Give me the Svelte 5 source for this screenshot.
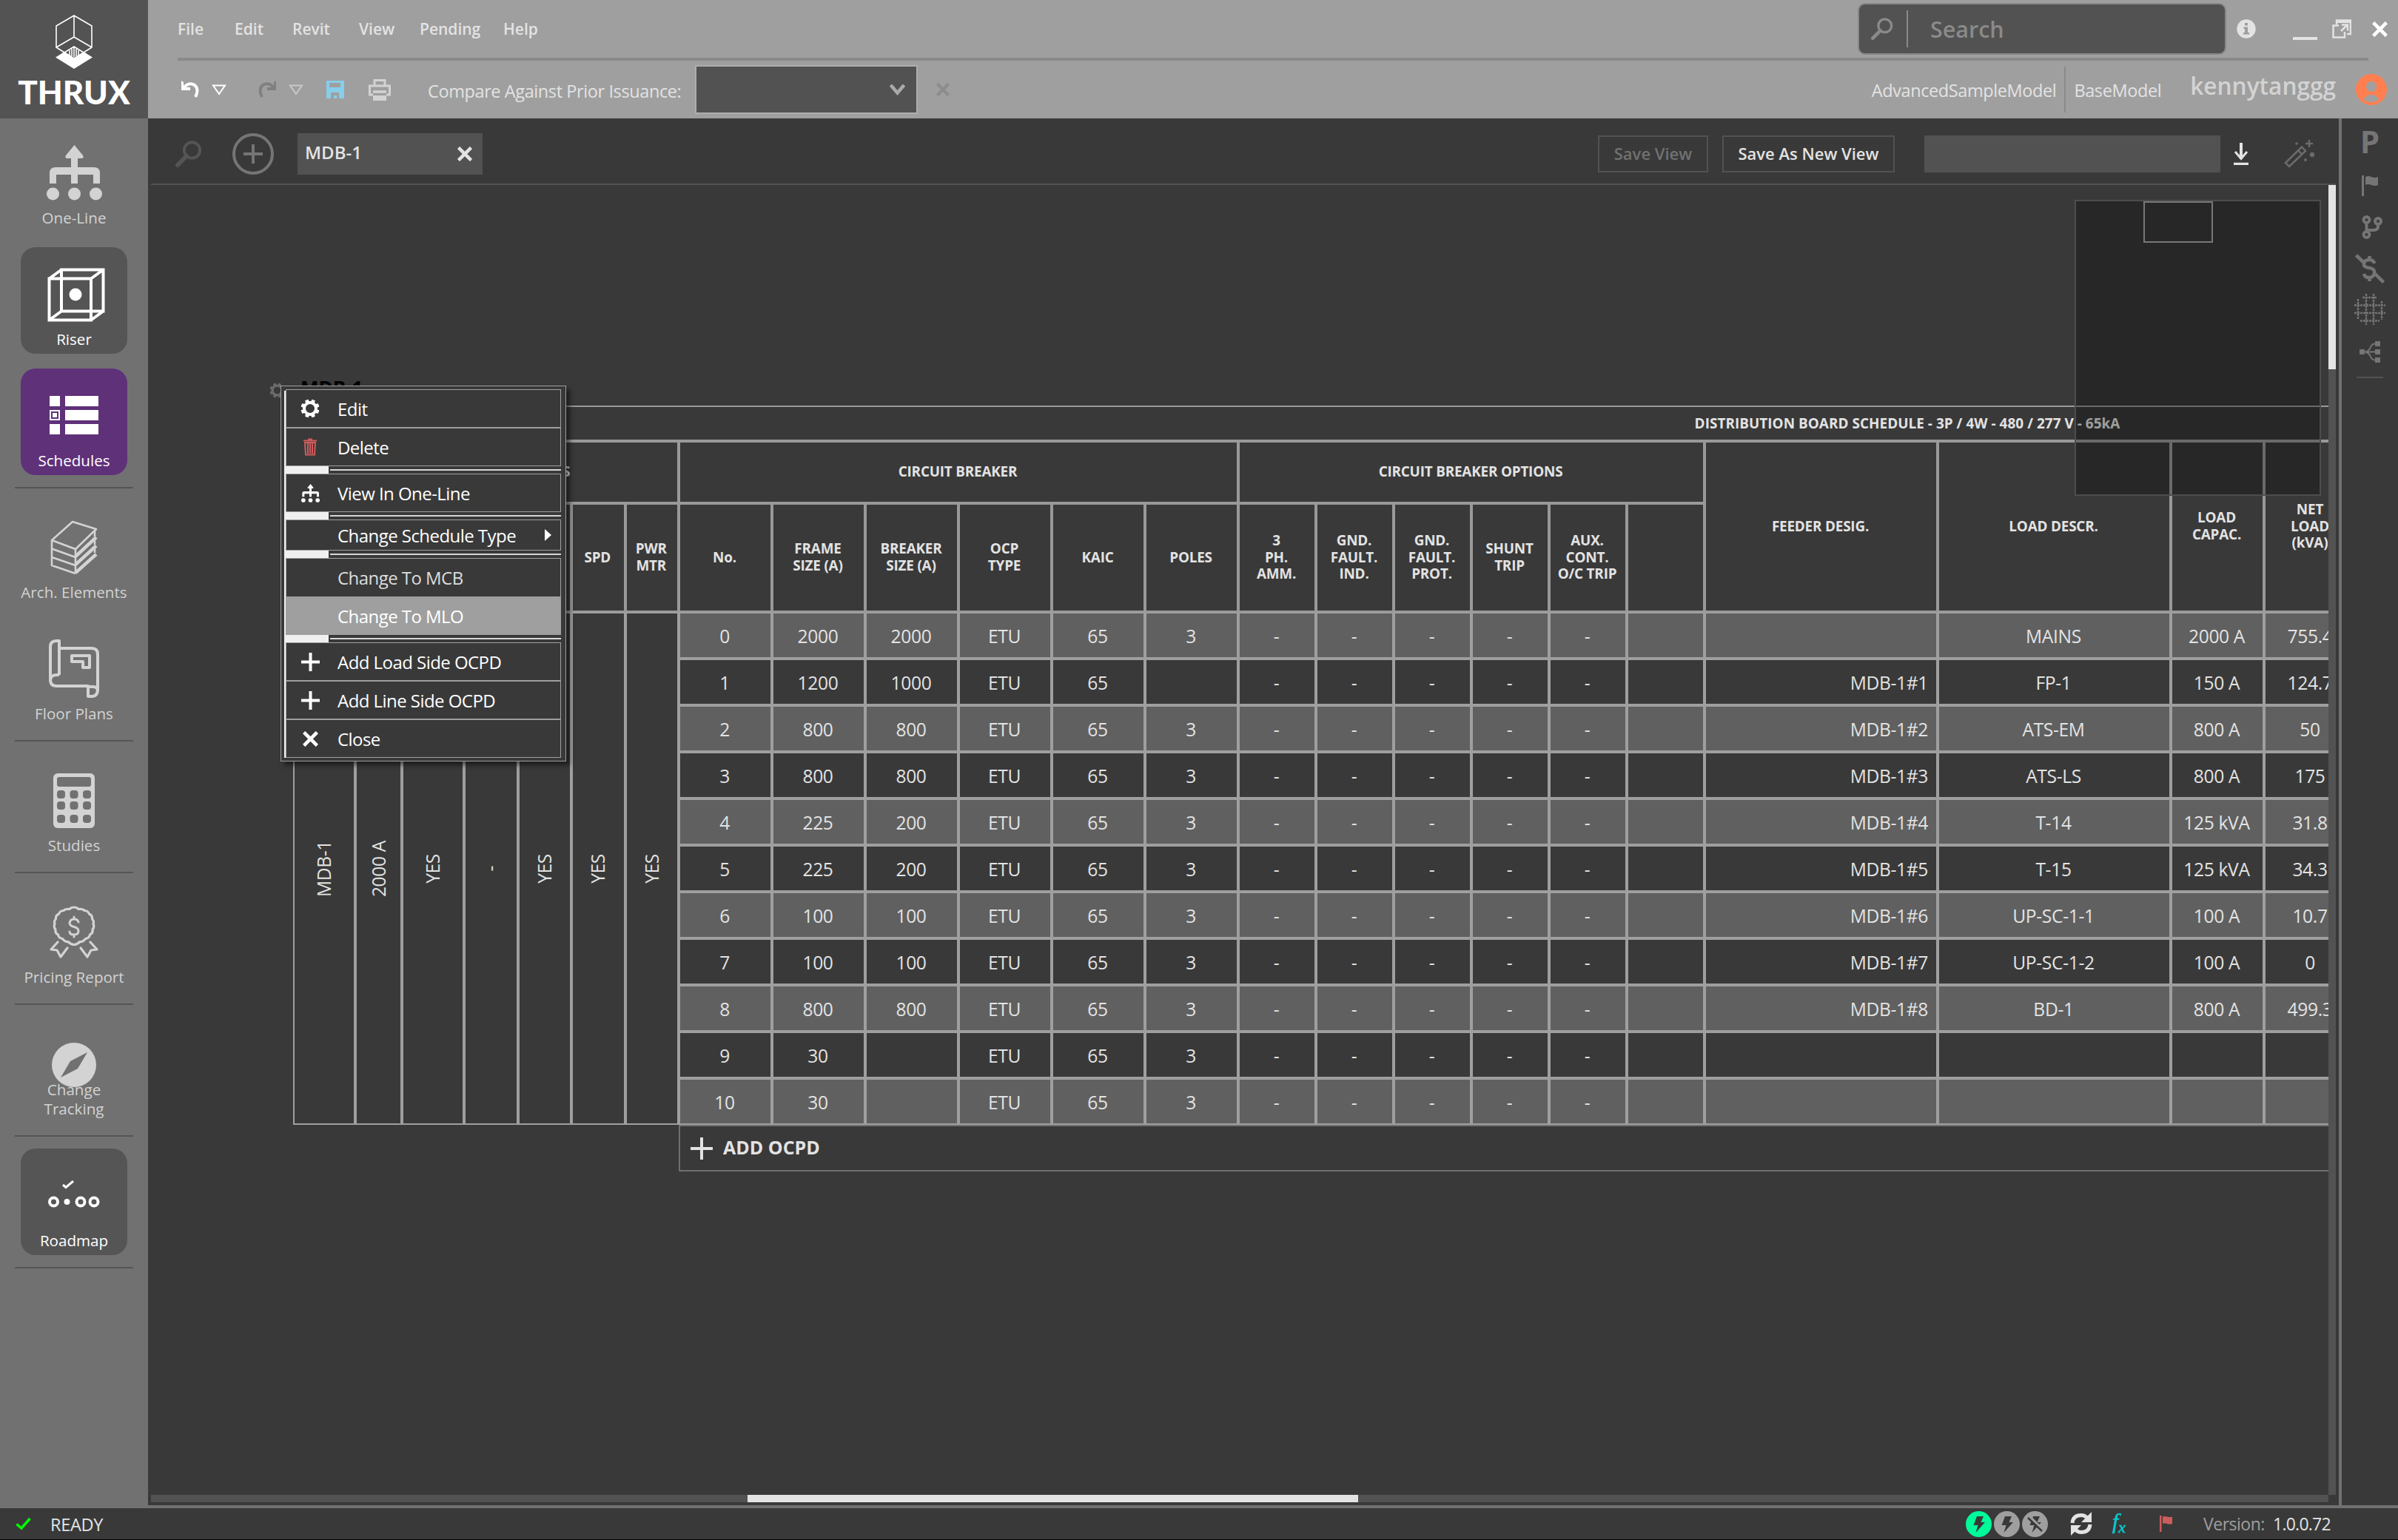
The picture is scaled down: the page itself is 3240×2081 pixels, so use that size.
<script>
  const menu = ['File', 'Edit', 'Revit', 'View', 'Pending', 'Help'];

  // nav entries are split in groups, each group is closed by a separator
  const nav = [
    [
      { id: 'one-line', label: 'One-Line' },
      { id: 'riser', label: 'Riser', open: true },
      { id: 'schedules', label: 'Schedules', active: true },
    ],
    [
      { id: 'arch', label: 'Arch. Elements' },
      { id: 'floor', label: 'Floor Plans' },
    ],
    [{ id: 'studies', label: 'Studies' }],
    [{ id: 'pricing', label: 'Pricing Report' }],
    [{ id: 'tracking', label: 'Change Tracking' }],
    [{ id: 'roadmap', label: 'Roadmap', open: true }],
  ];

  const leftHeads = ['', '', '', '', '', 'SPD', 'PWR MTR'];
  const leftValues = ['MDB-1', '2000 A', 'YES', '-', 'YES', 'YES', 'YES'];
  const breakerHeads = ['No.', 'FRAME\nSIZE (A)', 'BREAKER\nSIZE (A)', 'OCP\nTYPE', 'KAIC', 'POLES'];
  const optionHeads = ['3\nPH.\nAMM.', 'GND.\nFAULT.\nIND.', 'GND.\nFAULT.\nPROT.', 'SHUNT\nTRIP', 'AUX.\nCONT.\nO/C TRIP', ''];
  const loadHeads = ['FEEDER DESIG.', 'LOAD DESCR.', 'LOAD\nCAPAC.', 'NET\nLOAD\n(kVA)', ''];

  const circuits = [
    { frame: 2000, breaker: 2000, poles: 3, feeder: '', load: 'MAINS', capacity: '2000 A', net: '755.4' },
    { frame: 1200, breaker: 1000, poles: '', feeder: 'MDB-1#1', load: 'FP-1', capacity: '150 A', net: '124.7' },
    { frame: 800, breaker: 800, poles: 3, feeder: 'MDB-1#2', load: 'ATS-EM', capacity: '800 A', net: '50' },
    { frame: 800, breaker: 800, poles: 3, feeder: 'MDB-1#3', load: 'ATS-LS', capacity: '800 A', net: '175' },
    { frame: 225, breaker: 200, poles: 3, feeder: 'MDB-1#4', load: 'T-14', capacity: '125 kVA', net: '31.8' },
    { frame: 225, breaker: 200, poles: 3, feeder: 'MDB-1#5', load: 'T-15', capacity: '125 kVA', net: '34.3' },
    { frame: 100, breaker: 100, poles: 3, feeder: 'MDB-1#6', load: 'UP-SC-1-1', capacity: '100 A', net: '10.7' },
    { frame: 100, breaker: 100, poles: 3, feeder: 'MDB-1#7', load: 'UP-SC-1-2', capacity: '100 A', net: '0' },
    { frame: 800, breaker: 800, poles: 3, feeder: 'MDB-1#8', load: 'BD-1', capacity: '800 A', net: '499.3' },
    { frame: 30, breaker: '', poles: 3, feeder: '', load: '', capacity: '', net: '' },
    { frame: 30, breaker: '', poles: 3, feeder: '', load: '', capacity: '', net: '' },
  ];

  const contextMenu = [
    [
      { label: 'Edit', icon: 'gear' },
      { label: 'Delete', icon: 'trash' },
    ],
    [{ label: 'View In One-Line', icon: 'tree' }],
    [{ label: 'Change Schedule Type', submenu: true }],
    [
      { label: 'Change To MCB', disabled: true },
      { label: 'Change To MLO', hover: true },
    ],
    [
      { label: 'Add Load Side OCPD', icon: 'plus' },
      { label: 'Add Line Side OCPD', icon: 'plus' },
      { label: 'Close', icon: 'close' },
    ],
  ];

  const teeth = [0, 45, 90, 135, 180, 225, 270, 315];
  const bolt = 'M15 7h9l-3.500 8h5.500l-12.500 14l3-10h-6z';
</script>

{#snippet tree(size)}
  <svg width={size} height={size} viewBox="0 0 75 75" fill="currentColor">
    <path d="M37.500 0L49 14q2 4-2 4h-5v12h22q8 0 8 8v14h-9V40H42v12h-9V40H13v12H4V38q0-8 8-8h21V18h-5q-4 0-2-4z" />
    <circle cx="8.500" cy="66" r="8.500" /><circle cx="37.500" cy="66" r="8.500" /><circle cx="66.500" cy="66" r="8.500" />
  </svg>
{/snippet}

{#snippet gear(size)}
  <svg width={size} height={size} viewBox="0 0 26 26">
    <circle cx="13" cy="13" r="8" fill="none" stroke="currentColor" stroke-width="4" />
    {#each teeth as angle}
      <rect x="10.500" y="0.500" width="5" height="4.500" rx="1" fill="currentColor" transform="rotate({angle + 22.5} 13 13)" />
    {/each}
  </svg>
{/snippet}

{#snippet magnifier(w, h)}
  <svg width={w} height={h} viewBox="0 0 32 32" fill="none" stroke="currentColor">
    <circle cx="20" cy="11.500" r="9.500" stroke-width="3.500" />
    <path d="M13.500 18.500L2.500 29.500" stroke-width="5" stroke-linecap="round" />
  </svg>
{/snippet}

{#snippet cross(size)}
  <svg width={size} height={size} viewBox="0 0 20 20" stroke="currentColor" stroke-width="4.500">
    <path d="M1.500 1.500L18.500 18.500M18.500 1.500L1.500 18.500" />
  </svg>
{/snippet}

{#snippet navIcon(id)}
  {#if id === 'one-line'}
    {@render tree(75)}
  {:else if id === 'riser'}
    <svg width="78" height="73" viewBox="0 0 78 73" fill="none" stroke="#fff" stroke-width="4">
      <path d="M2.500 14.500H59V70.500H2.500zM19 2.500H75.500V58.500H19zM2.500 14.500L19 2.500M59 14.500L75.500 2.500M59 70.500L75.500 58.500M2.500 70.500L19 58.500" />
      <circle cx="38" cy="36" r="8.500" fill="#fff" stroke="none" />
    </svg>
  {:else if id === 'schedules'}
    <svg width="66" height="53" viewBox="0 0 66 53" fill="#fff">
      <path d="M0 0h14v14H0zM21 0h45v14H21zM0 19h14v14H0zM21 19h45v14H21zM0 38h14v14H0zM21 38h45v14H21z" />
      <rect x="3" y="22" width="8" height="8" fill="none" stroke="#5f3179" stroke-width="2" />
    </svg>
  {:else if id === 'arch'}
    <svg width="64" height="74" viewBox="0 0 64 74" fill="none" stroke="currentColor" stroke-width="2.600" stroke-linejoin="round">
      <path d="M2 27L30 2L62 12L34 39z" />
      <path d="M2 27V61L34 72M34 39V72M2 38.500L34 50M2 50L34 61M60 14V22M60 25V33M60 36V44" />
      <path d="M34 49L62 23M34 60L62 34.500M34 71L62 46" stroke-width="4.500" />
    </svg>
  {:else if id === 'floor'}
    <svg width="68" height="79" viewBox="0 0 68 79" fill="none" stroke="currentColor" stroke-width="4" stroke-linejoin="round">
      <path d="M14 48V2H10Q2 2 2 10V54Q2 63 10 63H53V77H58Q66 77 66 67V20Q66 12 58 12H14M14 48H10Q2 48 2 56M53 64H60Q66 64 66 70" />
      <path d="M31 22H55V38H46V30H31z" />
    </svg>
  {:else if id === 'studies'}
    <svg width="56" height="74" viewBox="0 0 56 74">
      <rect width="56" height="74" rx="6" fill="currentColor" />
      <g fill="#717171">
        <rect x="5" y="5" width="46" height="13" rx="3" />
        {#each [23, 38, 56] as y}
          {#each [5, 22.500, 40] as x}
            <rect {x} {y} width="11" height="11" rx="4" />
          {/each}
        {/each}
      </g>
    </svg>
  {:else if id === 'pricing'}
    <svg width="66" height="71" viewBox="0 0 66 71" fill="none" stroke="currentColor" stroke-width="3.200" stroke-linejoin="round" stroke-linecap="round">
      <path d="M33 2q4 0 6 2.500q6-.5 8 2q5 0 6.500 4.500q4.500 2 4 6.500q3 4 1.500 7q2 4-1 7.500q1 5-3.500 7q-1 5-6 5.500q-3 4.500-7.500 4q-4 4-8 4t-8-4q-4.500.5-7.500-4q-5-.5-6-5.500q-4.500-2-3.500-7q-3-3.500-1-7.500q-1.500-3 1.500-7q-.5-4.500 4-6.500q1.500-4.500 6.500-4.500q2-2.500 8-2q2-2.500 6-2.500z" />
      <path d="M11 49L2 59l8 1l5 9l9-12M55 49L64 59l-8 1l-5 9l-9-12" />
      <path d="M39 22q-1-4-6-4t-6 5q0 4 6 5.500t6 5.500q0 5-6 5t-6-4M33 15v3M33 39v3" stroke-width="3" />
    </svg>
  {:else if id === 'tracking'}
    <svg width="60" height="60" viewBox="0 0 60 60">
      <circle cx="30" cy="30" r="30" fill="currentColor" />
      <path d="M48 13L35 35L12 47L25 25z" fill="#717171" />
    </svg>
  {:else}
    <svg width="70" height="37" viewBox="0 0 70 37" fill="none" stroke="#fff" stroke-width="4">
      <circle cx="7.500" cy="29" r="5.500" /><circle cx="44" cy="29" r="5.500" /><circle cx="62" cy="29" r="5.500" />
      <circle cx="25.500" cy="29" r="4" fill="#fff" stroke="none" />
      <path d="M20 6L24 9.500L34 1" stroke-width="3" />
    </svg>
  {/if}
{/snippet}

{#snippet menuIcon(icon)}
  {#if icon === 'gear'}
    {@render gear(26)}
  {:else if icon === 'trash'}
    <svg width="18" height="24" viewBox="0 0 18 24" fill="none" stroke="#cd5c5c" stroke-width="2">
      <path d="M0 3.500h18M6 1.500h6M2 6l1 16.500h12l1-16.500zM6 7v14M9 7v14M12 7v14" />
    </svg>
  {:else if icon === 'tree'}
    {@render tree(25)}
  {:else if icon === 'plus'}
    <svg width="25" height="25" viewBox="0 0 25 25" fill="#fff"><path d="M10.500 0h4v10.500H25v4H14.500V25h-4V14.500H0v-4h10.500z" /></svg>
  {:else if icon === 'close'}
    {@render cross(21)}
  {/if}
{/snippet}

<div class="app">
  <div class="window">
    <aside class="sidebar">
      <div class="logo">
        <svg width="50" height="74" viewBox="0 0 50 74" fill="none" stroke="#fff" stroke-width="1.600">
          <path d="M25 1L49 15V44L25 59L1 44V15zM25 1V30M1 44L25 30L49 44" />
          <path d="M0 57.500L12 50L25 59L38 50L50 57.500L25 73z" fill="#fff" stroke="none" />
          <path d="M12 51L25 43L38 51M19 48v7M22 46v10M25 44v13M28 46v10M31 48v7" />
        </svg>
        <span>THRUX</span>
      </div>
      <nav>
        {#each nav as group}
          <div class="nav-group">
            {#each group as item}
              <button class="nav-item" class:open={item.open} class:active={item.active}>
                <span class="nav-icon {item.id}">{@render navIcon(item.id)}</span>
                <span class="nav-label">{item.label}</span>
              </button>
            {/each}
          </div>
        {/each}
      </nav>
    </aside>

    <div class="content">
      <header>
        <div class="title-row">
          <div class="menu">
            {#each menu as entry}
              <span>{entry}</span>
            {/each}
          </div>
          <div class="search">
            <span class="search-icon">{@render magnifier(30, 30)}</span>
            <span class="search-text">Search</span>
          </div>
          <div class="window-buttons">
            <svg width="26" height="26" viewBox="0 0 26 26">
              <circle cx="13" cy="13" r="12.700" fill="#e3e3e3" />
              <path d="M11 5h4v3.500h-4zM9.500 10.500H15V18h2v2.500H9V18h2v-5H9.500z" fill="#9f9f9f" />
            </svg>
            <svg class="minimize" width="33" height="4" viewBox="0 0 33 4"><rect width="33" height="4" fill="#e3e3e3" /></svg>
            <svg class="restore" width="26" height="26" viewBox="0 0 26 26" fill="none" stroke="#e3e3e3" stroke-width="2.500">
              <path d="M6 7V1.500H25V20H20M1.500 11V24.500H17V17M9 8.500H1.500V11M12 16L20 8M13 7.500h8v8" />
              <path d="M6 3H25" stroke-width="4" />
            </svg>
            <span class="window-close">{@render cross(21)}</span>
          </div>
        </div>
        <div class="tool-row">
          <svg width="24" height="24" viewBox="0 0 24 24" fill="none" stroke="#fff">
            <path d="M3 9.500Q8 3.500 14 4.500Q21 6 21.500 13Q21.500 18 19 22" stroke-width="4" />
            <path d="M0 0l3 2v7h9v4H0z" fill="#fff" stroke="none" />
          </svg>
          <svg class="drop" width="20" height="15" viewBox="0 0 20 15" fill="none" stroke="#fff" stroke-width="2"><path d="M2 1.500h16L10 13z" /></svg>
          <svg class="redo" width="24" height="24" viewBox="0 0 24 24" fill="none" stroke="#808080">
            <path d="M21 9.500Q16 3.500 10 4.500Q3 6 2.500 13Q2.500 18 5 22" stroke-width="4" />
            <path d="M24 0l-3 2v7h-9v4h12z" fill="#808080" stroke="none" />
          </svg>
          <svg class="drop" width="20" height="15" viewBox="0 0 20 15" fill="none" stroke="#c8c8c8" stroke-width="2"><path d="M2 1.500h16L10 13z" /></svg>
          <svg class="save" width="24" height="24" viewBox="0 0 24 24">
            <path d="M0 0h24v24H0z" fill="#87ceeb" />
            <path d="M4 3h15v6H4zM6 16h11v8h-3v-4h-4v4H6z" fill="#9f9f9f" />
          </svg>
          <svg class="print" width="30" height="29" viewBox="0 0 30 29" fill="none" stroke="#d3d3d3" stroke-width="3">
            <path d="M8 9V1.500h14V9M6 21H1.500V9h27v12H24" />
            <path d="M6 22h18v7H6z" fill="#d3d3d3" stroke="none" />
            <path d="M6 17h18" stroke-width="3.500" />
          </svg>
          <span class="compare">Compare Against Prior Issuance:</span>
          <div class="select">
            <svg width="21" height="18" viewBox="0 0 21 18" fill="none" stroke="#aaa" stroke-width="4.500"><path d="M1.500 3L10.500 13.500L19.500 3" /></svg>
          </div>
          <span class="clear-select">{@render cross(18)}</span>
          <div class="account">
            <span class="model">AdvancedSampleModel</span>
            <span class="model base">BaseModel</span>
            <span class="user">kennytanggg</span>
            <svg width="42" height="42" viewBox="0 0 42 42">
              <circle cx="21" cy="21" r="21" fill="#ff7f50" />
              <circle cx="21" cy="17" r="7" fill="#9f9f9f" />
              <path d="M11 35q2-7 10-7t10 7q-10 6-20 0z" fill="#9f9f9f" />
            </svg>
          </div>
        </div>
      </header>

      <div class="workspace">
        <main>
          <div class="view-bar">
            <span class="view-search">{@render magnifier(36, 36)}</span>
            <svg class="add-view" width="56" height="56" viewBox="0 0 56 56" fill="none" stroke="#757575" stroke-width="4">
              <circle cx="28" cy="28" r="26" /><path d="M28 15v26M15 28h26" />
            </svg>
            <div class="tab"><span>MDB-1</span>{@render cross(20)}</div>
            <div class="view-actions">
              <button class="view-button muted">Save View</button>
              <button class="view-button save-new">Save As New View</button>
              <div class="view-input"></div>
              <svg class="download" width="20" height="30" viewBox="0 0 20 30" fill="none" stroke="#e3e3e3">
                <path d="M10 0v22" stroke-width="4" /><path d="M2 12L10 21.500L18 12" stroke-width="3" /><path d="M0 28.500h20" stroke-width="3.500" />
              </svg>
              <svg width="42" height="38" viewBox="0 0 42 38" fill="none" stroke="#6b6b6b" stroke-width="2.600">
                <path d="M24 9.500L29 15L7 36L2 31zM19 14L24 19.500" />
                <path d="M34 0v10M29 5h10" stroke-width="2.500" />
                <g fill="#6b6b6b" stroke="none"><circle cx="38" cy="20" r="3.200" /><circle cx="29" cy="27" r="2" /><circle cx="17" cy="5" r="1.800" /></g>
              </svg>
            </div>
          </div>

          <div class="viewport">
            <div class="canvas">
              <span class="board-gear">{@render gear(21)}</span>
              <span class="board-name">MDB-1</span>

              <div class="schedule">
                <div class="cell head title">DISTRIBUTION BOARD SCHEDULE - 3P / 4W - 480 / 277 V - 65kA</div>

                <div class="cell head group-left">BOARD CHARACTERISTICS</div>
                <div class="cell head group-six">CIRCUIT BREAKER</div>
                <div class="cell head group-six">CIRCUIT BREAKER OPTIONS</div>
                {#each loadHeads as head}
                  <div class="cell head tall">{head}</div>
                {/each}

                {#each [...leftHeads, ...breakerHeads, ...optionHeads] as head}
                  <div class="cell head">{head}</div>
                {/each}

                {#each leftValues as value}
                  <div class="cell vertical"><span>{value}</span></div>
                {/each}

                {#each circuits as c, no}
                  {#each [no, c.frame, c.breaker, 'ETU', 65, c.poles, '-', '-', '-', '-', '-', '', c.feeder, c.load, c.capacity, c.net, ''] as value, col}
                    <div class="cell" class:alt={no % 2 === 0} class:feeder={col === 12}>{value}</div>
                  {/each}
                {/each}

                <div class="add-ocpd">
                  <svg width="30" height="30" viewBox="0 0 30 30" fill="#e3e3e3"><path d="M13 0h4v13h13v4H17v13h-4V17H0v-4h13z" /></svg>
                  <span>ADD OCPD</span>
                </div>
              </div>

              <div class="minimap"><div class="minimap-view"></div></div>

              <div class="context-menu">
                {#each contextMenu as section, i}
                  {#if i > 0}
                    <div class="separator"><i></i><b></b></div>
                  {/if}
                  {#each section as item}
                    <div class="context-item" class:short={item.submenu} class:disabled={item.disabled} class:hover={item.hover}>
                      <span class="context-icon">{@render menuIcon(item.icon)}</span>
                      <span class="context-label">{item.label}</span>
                      {#if item.submenu}
                        <svg class="arrow" width="9" height="16" viewBox="0 0 9 16"><path d="M0 0L9 8L0 16z" fill="#fff" /></svg>
                      {/if}
                    </div>
                  {/each}
                {/each}
              </div>
            </div>
            <div class="track-y"><div class="thumb-y"></div></div>
            <div class="track-x"><div class="thumb-x"></div></div>
          </div>
        </main>

        <aside class="rail">
          <span class="letter">P</span>
          <svg width="22" height="28" viewBox="0 0 22 28" fill="#757575"><path d="M0 0h3v28H0zM5 2q4-2 8 0t9 0v11q-4 2-9 0t-8 0z" /></svg>
          <svg class="branch" width="28" height="32" viewBox="0 0 28 32" fill="none" stroke="#757575" stroke-width="4">
            <circle cx="6.500" cy="6" r="4" /><circle cx="22" cy="8" r="4" /><circle cx="6.500" cy="26" r="4" />
            <path d="M6.500 10v12M22 12v3q0 5-6 5H7" />
          </svg>
          <svg width="40" height="40" viewBox="0 0 40 40" fill="none" stroke="#757575" stroke-width="4.500">
            <path d="M1.500 2L12 12M27 27L38.500 38.500" />
            <path d="M26 13q-1-5-7-5t-7 5t7 6t7 7t-7 6t-7-5M19.500 3v5M19.500 32v5" />
          </svg>
          <svg width="42" height="42" viewBox="0 0 42 42" fill="none" stroke="#757575" stroke-width="2.400" stroke-dasharray="3 1">
            <path d="M0 15.500h42M0 26h42M16 0v42M26 0v42M5 7v28M37 10v25M11 5h20M8 36.500h26" />
          </svg>
          <svg width="28" height="29" viewBox="0 0 28 29" fill="#757575">
            <path d="M0 11h7v7H0zM21 0h7v7h-7zM21 11h7v7h-7zM21 22h7v7h-7z" />
            <path d="M6 14.500h16M8 14.500Q13 13 15 8T22 3.500M8 14.500Q13 16 15 21T22 25.500" fill="none" stroke="#757575" stroke-width="2" />
          </svg>
          <hr />
        </aside>
      </div>
    </div>
  </div>

  <footer>
    <svg class="ready-check" width="21" height="18" viewBox="0 0 21 18" fill="none" stroke="#00ff00" stroke-width="3.500"><path d="M1.500 9.500L8 15L19.500 2" /></svg>
    <span class="ready">READY</span>
    <div class="status">
      <svg width="35" height="35" viewBox="0 0 35 35"><circle cx="17.500" cy="17.500" r="17.500" fill="#00fa9a" /><path d={bolt} fill="#393939" /></svg>
      <svg width="35" height="35" viewBox="0 0 35 35"><circle cx="17.500" cy="17.500" r="17.500" fill="#9f9f9f" /><path d={bolt} fill="#393939" /></svg>
      <svg width="35" height="35" viewBox="0 0 35 35">
        <circle cx="17.500" cy="17.500" r="17.500" fill="#9f9f9f" /><path d={bolt} fill="#393939" />
        <path d="M10 8L28 26" stroke="#9f9f9f" stroke-width="5" /><path d="M8 9L27 27" stroke="#393939" stroke-width="2.500" />
      </svg>
      <svg class="sync" width="30" height="32" viewBox="0 0 30 32" fill="none" stroke="#e3e3e3" stroke-width="5">
        <path d="M3 15Q4 4.500 15 4.500Q20 4.500 24 9M27 17Q26 27.500 15 27.500Q10 27.500 6 23" />
        <path d="M29 0v14H15zM1 32V18h14z" fill="#e3e3e3" stroke="none" />
      </svg>
      <span class="fx">f<sub>x</sub></span>
      <svg class="status-flag" width="17" height="22" viewBox="0 0 17 22" fill="#cd5c5c"><path d="M0 0h2.500v22H0zM4 1.500q3-1 6 0t7 0V11q-3 1.500-7 0t-6 0z" /></svg>
      <span class="version">Version:</span>
      <span class="version-number">1.0.0.72</span>
    </div>
  </footer>
</div>

<style>
  :global(body) {
    background: #000;
  }

  .app {
    width: 3240px;
    height: 2081px;
    overflow: hidden;
    font-family: "Open Sans", "Noto Sans", sans-serif;
    color: #e3e3e3;
    background: #393939;
  }

  .app *,
  .app {
    box-sizing: border-box;
  }

  svg {
    display: block;
    flex: none;
  }

  button {
    font: inherit;
    color: inherit;
    border: 0;
    padding: 0;
    background: none;
  }

  .window {
    display: flex;
    height: 2038px;
  }

  .content {
    flex: 1;
    min-width: 0;
    display: flex;
    flex-direction: column;
  }

  /* sidebar */
  .sidebar {
    width: 200px;
    background: #717171;
    color: #d3d3d3;
  }

  .logo {
    height: 160px;
    padding-top: 20px;
    display: flex;
    flex-direction: column;
    align-items: center;
    background: #535353;
    color: #fff;
  }

  .logo span {
    margin-top: 3px;
    font: 900 44px/54px Lato, sans-serif;
  }

  nav {
    padding-top: 10px;
  }

  .nav-group {
    display: flex;
    flex-direction: column;
    align-items: center;
    gap: 20px;
  }

  .nav-group::after {
    content: "";
    width: 160px;
    height: 2px;
    margin: -4px 0 16px;
    background: #555;
  }

  .nav-item {
    width: 164px;
    height: 144px;
    display: flex;
    flex-direction: column;
    align-items: center;
    justify-content: flex-end;
    padding-bottom: 7px;
    border-radius: 20px;
    font-size: 20.6px;
    line-height: 25.5px;
  }

  .open,
  .active {
    width: 144px;
    background: #555;
    color: #fff;
  }

  .active {
    background: #5f3179;
  }

  .nav-icon {
    margin-bottom: 11px;
  }

  .nav-icon.riser {
    margin: 0 -6px 11px 0;
  }

  .nav-icon.schedules {
    margin-bottom: 22px;
  }

  .nav-icon.floor {
    margin-bottom: 9px;
  }

  .nav-icon.pricing {
    margin-bottom: 13px;
  }

  .nav-icon.tracking {
    margin-bottom: -9px;
  }

  .nav-icon.roadmap {
    margin-bottom: 32px;
  }

  .nav-icon.tracking + .nav-label {
    position: relative;
    width: 100px;
    text-align: center;
  }

  /* header */
  header {
    height: 160px;
    flex: none;
    background: #9f9f9f;
    padding: 0 0 0 40px;
  }

  .title-row {
    height: 82px;
    display: flex;
    align-items: center;
    border-bottom: 4px solid #8a8a8a;
    margin-right: 40px;
  }

  .menu {
    display: grid;
    grid-template-columns: 77px 78px 90px 82px 113px 60px;
    font-size: 21px;
    font-weight: 600;
    line-height: 28px;
    margin-right: auto;
  }

  .search {
    width: 498px;
    height: 70px;
    flex: none;
    display: flex;
    align-items: center;
    border: 2px solid #888;
    border-radius: 10px;
    background: #525252;
    color: #8a8a8a;
  }

  .search-icon {
    width: 66px;
    height: 50px;
    display: flex;
    align-items: center;
    justify-content: center;
    padding-right: 2px;
    border-right: 2px solid #8a8a8a;
  }

  .search-text {
    margin-left: 30px;
    font-size: 30.5px;
    font-weight: 600;
    line-height: 40px;
  }

  .window-buttons {
    display: flex;
    align-items: center;
    margin: 0 -26px 0 14px;
    color: #e3e3e3;
  }

  .minimize {
    margin: 26px 20px 0 50px;
  }

  .window-close {
    margin-left: 28px;
    color: #fff;
  }

  .tool-row {
    height: 78px;
    display: flex;
    align-items: center;
    padding-left: 5px;
    font-size: 23.5px;
    letter-spacing: -0.4px;
  }

  .drop {
    margin-left: 17px;
  }

  .redo {
    margin-left: 43px;
  }

  .save {
    margin-left: 31px;
  }

  .print {
    margin-left: 33px;
  }

  .compare {
    width: 361px;
    margin-left: 50px;
    padding-top: 3px;
    white-space: nowrap;
  }

  .select {
    width: 301px;
    height: 66px;
    display: flex;
    align-items: center;
    justify-content: flex-end;
    padding-right: 15px;
    border: 2px solid #aeaeae;
    background: #525252;
  }

  .clear-select {
    margin-left: 25px;
    color: #8c8c8c;
  }

  .account {
    flex: 1;
    display: flex;
    align-items: center;
    justify-content: flex-end;
    padding-right: 15px;
  }

  .model {
    height: 62px;
    line-height: 64px;
    padding-right: 11px;
  }

  .base {
    padding-left: 11px;
    border-left: 2px solid #8a8a8a;
  }

  .user {
    margin: -11px 27px 0 28px;
    font-size: 31.6px;
    font-weight: 600;
    letter-spacing: 0;
    color: #d3d3d3;
  }

  /* workspace */
  .workspace {
    flex: 1;
    display: flex;
    border-bottom: 4px solid #717171;
  }

  main {
    width: 2960px;
    padding-left: 4px;
  }

  .view-bar {
    width: 2952px;
    height: 90px;
    display: flex;
    align-items: center;
    border-bottom: 2px solid #525252;
    padding: 8px 28px 0 33px;
  }

  .view-search {
    color: #555;
  }

  .add-view {
    margin: 0 32px 0 41px;
  }

  .tab {
    width: 250px;
    height: 56px;
    display: flex;
    align-items: center;
    justify-content: space-between;
    padding: 0 14px 0 10px;
    background: #525252;
    font-size: 24px;
    font-weight: 600;
  }

  .tab span {
    line-height: 52px;
    padding-bottom: 4px;
  }

  .view-actions {
    flex: 1;
    display: flex;
    align-items: center;
    justify-content: flex-end;
  }

  .view-button {
    width: 149px;
    height: 50px;
    border: 2px solid #525252;
    font-size: 22px;
    font-weight: 600;
    white-space: nowrap;
    padding-bottom: 2px;
  }

  .muted {
    color: #717171;
  }

  .save-new {
    width: 233px;
    margin-left: 19px;
  }

  .view-input {
    width: 400px;
    height: 50px;
    margin-left: 40px;
    background: #525252;
  }

  .download {
    margin: 0 48px 0 18px;
  }

  .viewport {
    display: grid;
    grid-template-columns: 2942px 10px;
    grid-template-rows: 1770px 10px;
  }

  .canvas {
    position: relative;
    overflow: hidden;
  }

  .track-x,
  .track-y {
    background: #525252;
  }

  .thumb-y {
    height: 249px;
    background: #e3e3e3;
  }

  .thumb-x {
    width: 825px;
    height: 10px;
    margin-left: 806px;
    background: #e3e3e3;
  }

  .board-gear {
    position: absolute;
    left: 160px;
    top: 267px;
    color: #6b6b6b;
  }

  .board-name {
    position: absolute;
    left: 202px;
    top: 257px;
    font-size: 26px;
    font-weight: 700;
    line-height: 34px;
    color: #000;
  }

  .schedule {
    position: absolute;
    left: 192px;
    top: 298px;
    display: grid;
    grid-template-columns: 84px 63px 84px repeat(4, 72.5px) repeat(6, 126px) repeat(6, 105px) 315px 315px 126px 126px 1575px;
    grid-template-rows: 48px 84px 147px repeat(11, 63px) 63px;
  }

  .cell {
    display: flex;
    align-items: center;
    justify-content: center;
    border: 2px solid #9f9f9f;
    font-size: 24.6px;
    letter-spacing: -0.35px;
    white-space: nowrap;
    padding: 1px 2px 0 0;
  }

  .head {
    border-color: #999;
    font-size: 18.9px;
    font-weight: 700;
    line-height: 22.7px;
    letter-spacing: -0.2px;
    text-align: center;
    white-space: pre-line;
    padding: 0 9px 1px 7px;
  }

  .title {
    grid-column: 1 / -1;
    letter-spacing: 0.05px;
    padding-bottom: 0;
  }

  .group-left {
    grid-column: span 7;
    padding-right: 15px;
  }

  .group-six {
    grid-column: span 6;
  }

  .tall {
    grid-row: span 2;
  }

  .vertical {
    grid-row: span 11;
    padding-right: 0;
  }

  .vertical span {
    writing-mode: vertical-rl;
    transform: rotate(180deg);
    line-height: 34px;
  }

  .alt {
    background: #606060;
  }

  .feeder {
    justify-content: flex-end;
    padding-right: 11px;
  }

  .add-ocpd {
    grid-column: 8 / -1;
    display: flex;
    align-items: center;
    gap: 14px;
    padding-left: 14px;
    border: 2px solid #707070;
    font-size: 25px;
    font-weight: 700;
  }

  .add-ocpd span {
    margin-top: -4px;
  }

  .minimap {
    position: absolute;
    left: 2599px;
    top: 20px;
    width: 333px;
    height: 400px;
    border: 2px solid #4d4d4d;
    background: rgba(0, 0, 0, 0.3);
    background-clip: padding-box;
  }

  .minimap-view {
    width: 94px;
    height: 56px;
    margin-left: 91px;
    border: 2px solid #777;
  }

  .context-menu {
    position: absolute;
    left: 175px;
    top: 271px;
    width: 386px;
    height: 508px;
    padding: 4px 6px 4px 6px;
    border: 1px solid #9f9f9f;
    background: linear-gradient(#f0f0f0, #f0f0f0) 4px 6px / 3px 496px no-repeat #393939;
    box-shadow: 5px 5px 6px rgba(0, 0, 0, 0.5);
    color: #fff;
    font-size: 24px;
    letter-spacing: -0.55px;
  }

  .context-item {
    height: 52px;
    display: flex;
    align-items: center;
    border: 1px solid #9f9f9f;
  }

  .context-label {
    flex: 1;
  }

  .short {
    height: 42px;
  }

  .disabled {
    color: #ddd;
    border-bottom: 0;
  }

  .hover {
    background: #9f9f9f;
  }

  .context-icon {
    width: 64px;
    margin-right: 5px;
    display: flex;
    justify-content: center;
  }

  .arrow {
    margin-right: 12px;
  }

  .separator {
    height: 10px;
    display: flex;
    align-items: center;
    gap: 2px;
    margin-left: -2px;
  }

  .separator i {
    width: 60px;
    height: 10px;
    background: #f0f0f0;
  }

  .separator b {
    flex: 1;
    height: 2px;
    background: #d7d7d7;
  }

  /* right rail */
  .rail {
    width: 80px;
    display: flex;
    flex-direction: column;
    align-items: center;
    border-left: 4px solid #717171;
    color: #757575;
  }

  .letter {
    height: 77px;
    font-size: 42px;
    font-weight: 700;
    line-height: 61px;
  }

  .rail svg + svg {
    margin-top: 20px;
  }

  .rail svg.branch {
    margin: 26px 0 0 5px;
  }

  .rail svg:nth-child(5) {
    margin-top: 14px;
  }

  .rail svg:nth-child(6) {
    margin-top: 22px;
  }

  .rail hr {
    width: 36px;
    height: 2px;
    border: 0;
    margin: 19px 0 0;
    background: #525252;
  }

  /* status bar */
  footer {
    height: 43px;
    display: flex;
    align-items: center;
    border-bottom: 1px solid #000;
    padding: 0 91px 0 21px;
    font-size: 23.5px;
  }

  .ready {
    margin-left: 26px;
    padding-top: 2px;
    letter-spacing: -0.3px;
  }

  .status {
    flex: 1;
    display: flex;
    align-items: center;
    justify-content: flex-end;
    gap: 3px;
  }

  .sync {
    margin-left: 27px;
  }

  .fx {
    width: 61px;
    margin: -6px 0 0 24px;
    font: italic 30px/34px "Liberation Serif", serif;
    color: #00ced1;
    white-space: nowrap;
    -webkit-text-stroke: 0.5px #00ced1;
  }

  .fx sub {
    font-size: 22px;
    line-height: 0;
    vertical-align: -5px;
  }

  .status-flag {
    margin-right: 39px;
  }

  .version {
    width: 91px;
    color: #9f9f9f;
    font-size: 23px;
    letter-spacing: -0.5px;
  }

  .version-number {
    width: 78px;
    font-size: 23px;
    letter-spacing: -0.75px;
    white-space: nowrap;
  }
</style>
